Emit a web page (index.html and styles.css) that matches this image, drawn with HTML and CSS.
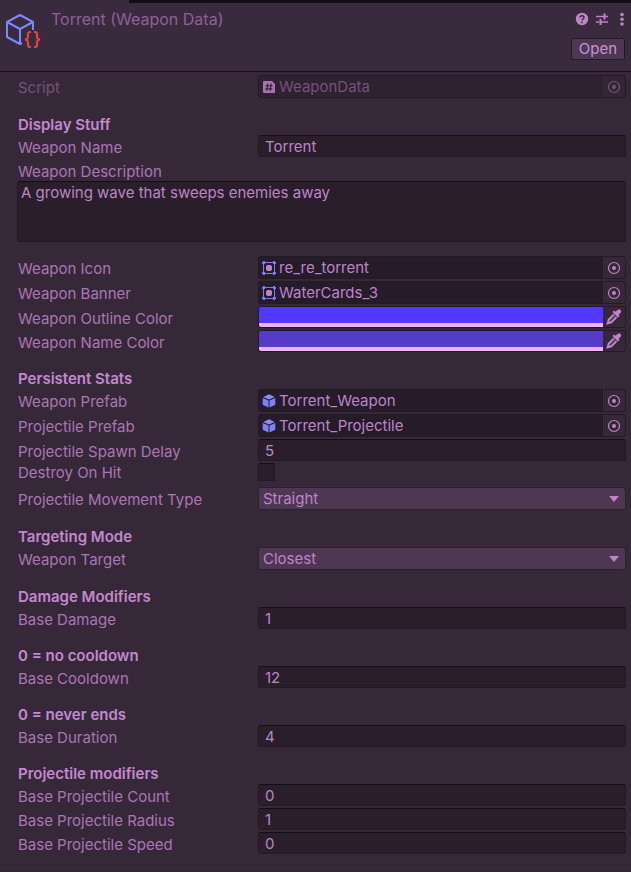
FILE: index.html
```html
<!DOCTYPE html>
<html lang="en">
<head>
  <meta charset="UTF-8">
  <meta name="viewport" content="width=device-width, initial-scale=1.0">
  <title>Torrent (Weapon Data)</title>
  <link rel="stylesheet" href="styles.css">
</head>
<body>

<svg class="defs" aria-hidden="true">
  <symbol id="target" viewBox="0 0 14 14">
    <circle cx="7" cy="7" r="5.5" fill="none" stroke="currentColor" stroke-width="1.2"/>
    <circle cx="7" cy="7" r="2" fill="currentColor"/>
  </symbol>
  <symbol id="script" viewBox="0 0 14 14">
    <path d="M2 1h8l3 3v9H2q-1 0-1-1V2q0-1 1-1z" fill="currentColor"/>
    <path d="M5.800 3.500 4.800 11M9.200 3.500 8.200 11M3.500 5.800h7M3.200 8.800h7" fill="none" stroke="#2a1e2b" stroke-width="1"/>
  </symbol>
  <symbol id="sprite" viewBox="0 0 14 14">
    <path d="M1.500 1.500h11v11h-11z" fill="none" stroke="#7b7cf0" stroke-width="1"/>
    <path d="M1 0h2v3H0V1h1zM11 0h2v1h1v2h-3zM0 11h3v3H1v-1H0zM11 11h3v2h-1v1h-2z" fill="#7b7cf0"/>
    <rect x="4" y="4" width="6" height="6" rx="2" fill="#bd85c8"/>
  </symbol>
  <symbol id="prefab" viewBox="0 0 14 14">
    <path d="M7 .300 12.700 2.900 7 5.500 1.300 2.900z" fill="#8a8cf8"/>
    <path d="M.7 4 6.500 6.600v7L.7 10.800zM13.300 4 7.500 6.600v7l5.800-2.800z" fill="#7f82f5"/>
  </symbol>
  <symbol id="dropper" viewBox="0 0 16 16">
    <path d="M9.500 2.800 11.600.9c1-.9 2.100-.8 2.900 0s.9 1.900 0 2.900l-1.900 2.100 1 1-1.700 1.700-5.500-5.500 1.700-1.700z" fill="currentColor"/>
    <path d="M8 5.500 2.800 10.700l-1 3.500 3.500-1L10.500 8" fill="none" stroke="currentColor" stroke-width="2.200"/>
  </symbol>
</svg>

<header class="header">
  <svg class="logo" viewBox="0 0 36 36" aria-hidden="true">
    <g fill="none" stroke="#7d88f5" stroke-width="2" stroke-linejoin="round">
      <path d="M28 17V9L15 2 2 9v15l13 7 2-1M15 31V16l13-7M2 9l13 7"/>
    </g>
    <path d="M26 19h-1q-2 0-2 2v3q0 2-3 2.500 3 .5 3 2.500v3q0 2 2 2h1M29 19h1q2 0 2 2v3q0 2 3 2.500-3 .5-3 2.500v3q0 2-2 2h-1" fill="none" stroke="#dc4440" stroke-width="2.200"/>
  </svg>
  <h1 class="title">Torrent (Weapon Data)</h1>
  <div class="actions">
    <div class="tools">
      <button class="tool" type="button" aria-label="Help">
        <svg viewBox="0 0 14 14"><circle cx="7" cy="7" r="6.200" fill="currentColor"/><path d="M5 5.500C5 3 9 3 9 5.500 9 7 7 7 7 8.600M7 9.700v1.500" fill="none" stroke="#38293b" stroke-width="1.500"/></svg>
      </button>
      <button class="tool" type="button" aria-label="Presets">
        <svg viewBox="0 0 14 14"><path d="M1 4.500h8M9 4.500h4M1 10h3M6 10h7" fill="none" stroke="currentColor" stroke-width="1.300"/><path d="M9.500 1.500v6M5.500 7v6" fill="none" stroke="currentColor" stroke-width="2"/></svg>
      </button>
      <button class="tool" type="button" aria-label="More">
        <svg viewBox="0 0 14 14"><circle cx="7" cy="2.500" r="1.800" fill="currentColor"/><circle cx="7" cy="7.300" r="1.800" fill="currentColor"/><circle cx="7" cy="12" r="1.800" fill="currentColor"/></svg>
      </button>
    </div>
    <button class="open" type="button">Open</button>
  </div>
</header>

<main class="inspector">
  <div class="row disabled">
    <label for="script-ref">Script</label>
    <div class="object">
      <svg class="icon" aria-hidden="true"><use href="#script"/></svg>
      <input id="script-ref" type="text" value="WeaponData" readonly>
      <button class="pick" type="button" aria-label="Select script" disabled><svg><use href="#target"/></svg></button>
    </div>
  </div>

  <h2>Display Stuff</h2>
  <div class="row">
    <label for="name">Weapon Name</label>
    <input class="field" id="name" type="text" value="Torrent">
  </div>
  <div class="area">
    <label for="description">Weapon Description</label>
    <textarea id="description">A growing wave that sweeps enemies away</textarea>
  </div>
  <div class="row">
    <label for="icon">Weapon Icon</label>
    <div class="object">
      <svg class="icon" aria-hidden="true"><use href="#sprite"/></svg>
      <input id="icon" type="text" value="re_re_torrent" readonly>
      <button class="pick" type="button" aria-label="Select icon"><svg><use href="#target"/></svg></button>
    </div>
  </div>
  <div class="row">
    <label for="banner">Weapon Banner</label>
    <div class="object">
      <svg class="icon" aria-hidden="true"><use href="#sprite"/></svg>
      <input id="banner" type="text" value="WaterCards_3" readonly>
      <button class="pick" type="button" aria-label="Select banner"><svg><use href="#target"/></svg></button>
    </div>
  </div>
  <div class="row">
    <label for="outline">Weapon Outline Color</label>
    <div class="color">
      <input id="outline" type="color" value="#5238ff">
      <button class="pick" type="button" aria-label="Sample outline color"><svg><use href="#dropper"/></svg></button>
    </div>
  </div>
  <div class="row">
    <label for="name-color">Weapon Name Color</label>
    <div class="color">
      <input id="name-color" type="color" value="#543cc8">
      <button class="pick" type="button" aria-label="Sample name color"><svg><use href="#dropper"/></svg></button>
    </div>
  </div>

  <h2>Persistent Stats</h2>
  <div class="row">
    <label for="weapon-prefab">Weapon Prefab</label>
    <div class="object">
      <svg class="icon" aria-hidden="true"><use href="#prefab"/></svg>
      <input id="weapon-prefab" type="text" value="Torrent_Weapon" readonly>
      <button class="pick" type="button" aria-label="Select weapon prefab"><svg><use href="#target"/></svg></button>
    </div>
  </div>
  <div class="row">
    <label for="projectile-prefab">Projectile Prefab</label>
    <div class="object">
      <svg class="icon" aria-hidden="true"><use href="#prefab"/></svg>
      <input id="projectile-prefab" type="text" value="Torrent_Projectile" readonly>
      <button class="pick" type="button" aria-label="Select projectile prefab"><svg><use href="#target"/></svg></button>
    </div>
  </div>
  <div class="row">
    <label for="delay">Projectile Spawn Delay</label>
    <input class="field" id="delay" type="text" value="5">
  </div>
  <div class="row toggle">
    <label for="destroy">Destroy On Hit</label>
    <input class="check" id="destroy" type="checkbox">
  </div>
  <div class="row">
    <label for="movement">Projectile Movement Type</label>
    <select class="dropdown" id="movement"><option>Straight</option></select>
  </div>

  <h2>Targeting Mode</h2>
  <div class="row">
    <label for="target-mode">Weapon Target</label>
    <select class="dropdown" id="target-mode"><option>Closest</option></select>
  </div>

  <h2>Damage Modifiers</h2>
  <div class="row">
    <label for="damage">Base Damage</label>
    <input class="field" id="damage" type="text" value="1">
  </div>

  <h2>0 = no cooldown</h2>
  <div class="row">
    <label for="cooldown">Base Cooldown</label>
    <input class="field" id="cooldown" type="text" value="12">
  </div>

  <h2>0 = never ends</h2>
  <div class="row">
    <label for="duration">Base Duration</label>
    <input class="field" id="duration" type="text" value="4">
  </div>

  <h2>Projectile modifiers</h2>
  <div class="row">
    <label for="count">Base Projectile Count</label>
    <input class="field" id="count" type="text" value="0">
  </div>
  <div class="row">
    <label for="radius">Base Projectile Radius</label>
    <input class="field" id="radius" type="text" value="1">
  </div>
  <div class="row">
    <label for="speed">Base Projectile Speed</label>
    <input class="field" id="speed" type="text" value="0">
  </div>
</main>

</body>
</html>
```
FILE: styles.css
```css
* { box-sizing: border-box; }
body { margin: 0; background: #362838; color: #ab76b6; font-family: Inter, sans-serif; font-size: 15px; line-height: 22px; }
body::before { content: ""; display: block; height: 3px; border-left: 129px solid #3a2a3d; background: #130d15; }
input, textarea, select, button { font: inherit; color: #bd85c8; margin: 0; }
button { padding: 0; border: none; background: none; }
.defs { display: none; }

.header { display: flex; height: 69px; padding: 5px 6px 0 5px; background: #3a2a3d; border-bottom: 1px solid #150e17; }
.logo { width: 36px; height: 36px; margin-top: 5px; }
.title { flex: 1; margin: 0 0 0 10px; font-size: 16px; font-weight: 400; color: #8f6099; }
.actions { display: flex; flex-direction: column; align-items: flex-end; gap: 12px; }
.tools { display: flex; gap: 6px; padding-top: 4px; margin-right: -4px; }
.tool { width: 14px; height: 14px; color: #bd85c8; }
.tool svg { display: block; width: 14px; height: 14px; }
.open { width: 54px; height: 22px; line-height: 20px; background: #4e3752; border: 1px solid #241926; border-radius: 3px; color: #cb92d7; }

.inspector { padding: 3px 5px 14px 17px; border-bottom: 1px solid #302332; }
h2 { height: 22px; margin: 13px 0 0; padding: 0 1px; font-size: 15px; font-weight: 600; line-height: 23px; color: #c388d0; }
.row { display: grid; grid-template-columns: 240px 1fr; padding: 0 0 2px 1px; }
.row label, .area label { height: 22px; line-height: 26px; }

.field { width: 100%; height: 22px; padding: 2px 6px 0; background: #2a1e2b; border: 1px solid #241926; border-top-color: #150e17; border-radius: 3px; }
.object, .color { display: flex; align-items: stretch; background: #261b28; border: 1px solid #241926; border-radius: 3px; overflow: hidden; }
.object { height: 23px; }
.color { height: 22px; }
.object input { flex: 1; min-width: 0; padding: 0 3px; background: none; border: none; }
.icon { width: 14px; height: 14px; margin: 4px 0 0 3px; color: #a374ad; }
.pick { display: flex; align-items: center; justify-content: center; width: 22px; background: #362838; color: #bd85c8; }
.pick svg { width: 14px; height: 14px; }
.color input { flex: 1; min-width: 0; height: 20px; padding: 0; border: none; border-bottom: 4px solid #efb2f8; background: none; appearance: none; }
.color input::-webkit-color-swatch-wrapper { padding: 0; }
.color input::-webkit-color-swatch { border: none; border-radius: 0; }
.color .pick svg { width: 16px; height: 16px; }
.disabled label, .disabled input { color: #76517e; }
.disabled .object { background: #2e2130; }
.disabled .pick { background: #332535; color: #76517e; }

.area { padding-bottom: 14px; }
.area label { display: block; padding-left: 1px; }
.area textarea { display: block; width: 100%; height: 61px; padding: 1px 3px; background: #2a1e2b; border: 1px solid #241926; border-top-color: #150e17; border-radius: 3px; resize: none; line-height: 20px; }

.toggle { padding-bottom: 6px; }
.toggle label { height: 18px; line-height: 20px; }
.check { appearance: none; width: 17px; height: 18px; background: #2a1e2b; border: 1px solid #241926; border-top-color: #150e17; border-radius: 2px; }
.dropdown { appearance: none; width: 100%; height: 23px; padding: 0 4px; border: 1px solid #2c1f2e; border-radius: 3px; background: #4e3752 url("data:image/svg+xml,%3Csvg xmlns='http://www.w3.org/2000/svg' width='10' height='6'%3E%3Cpath d='M0 0h10L5 6z' fill='%23bd85c8'/%3E%3C/svg%3E") no-repeat right 6px center; }
```
